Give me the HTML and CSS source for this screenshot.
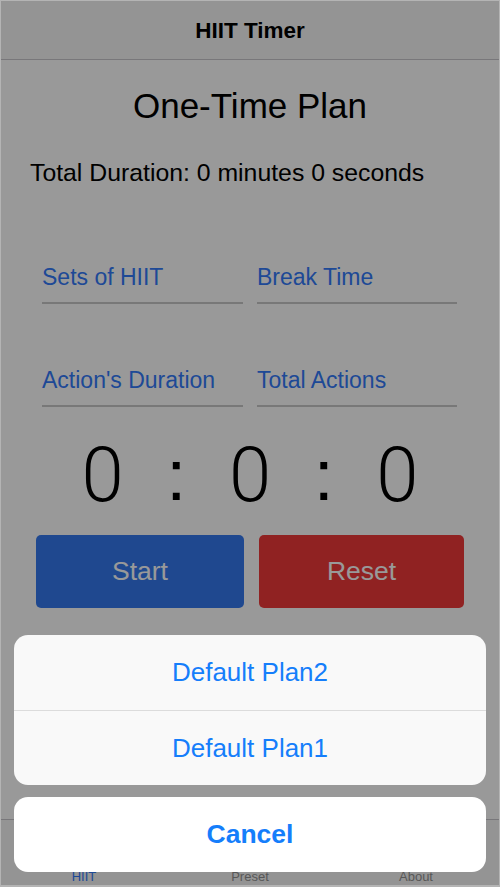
FILE: index.html
```html
<!DOCTYPE html>
<html>
<head>
<meta charset="utf-8">
<title>HIIT Timer</title>
<link rel="stylesheet" href="styles.css">
</head>
<body>
<div class="screen">
  <header class="navbar"><span class="nav-title">HIIT Timer</span></header>
  <main class="content">
    <h1 class="plan-title">One-Time Plan</h1>
    <p class="total">Total Duration: 0 minutes 0 seconds</p>
    <div class="fields">
      <div class="field">Sets of HIIT</div>
      <div class="field">Break Time</div>
      <div class="field">Action's Duration</div>
      <div class="field">Total Actions</div>
    </div>
    <div class="timer">
      <span>0</span><span class="colon">:</span><span>0</span><span class="colon">:</span><span>0</span>
    </div>
    <div class="buttons">
      <button class="btn btn-start">Start</button>
      <button class="btn btn-reset">Reset</button>
    </div>
  </main>
  <nav class="tabbar">
    <span class="tab tab-active">HIIT</span>
    <span class="tab">Preset</span>
    <span class="tab">About</span>
  </nav>
  <div class="dim"></div>
  <div class="sheet">
    <div class="sheet-group">
      <div class="sheet-item">Default Plan2</div>
      <div class="sheet-item">Default Plan1</div>
    </div>
    <div class="sheet-cancel">Cancel</div>
  </div>
</div>
</body>
</html>
```

FILE: styles.css
```css
html, body {
  margin: 0;
  padding: 0;
}
body {
  background: #b4b4b4;
  font-family: "Liberation Sans", Arial, sans-serif;
  padding: 1px 1px 2px 1px;
}
.screen {
  position: relative;
  height: 884px;
  background: #ffffff;
  overflow: hidden;
  display: flex;
  flex-direction: column;
}
.navbar {
  height: 58px;
  background: #f7f7f7;
  border-bottom: 1px solid #c8c7cc;
  display: flex;
  align-items: center;
  justify-content: center;
  flex: none;
}
.nav-title {
  font-weight: bold;
  font-size: 22.5px;
  color: #000;
  margin-top: 2px;
}
.content {
  flex: 1;
  display: flex;
  flex-direction: column;
}
.plan-title {
  margin: 26px 0 0 0;
  text-align: center;
  font-weight: normal;
  font-size: 35px;
  line-height: 40px;
  color: #000;
}
.total {
  margin: 33px 0 0 29px;
  font-size: 24.8px;
  line-height: 28px;
  color: #000;
}
.fields {
  display: grid;
  grid-template-columns: 201px 200px;
  column-gap: 14px;
  row-gap: 0;
  margin: 0 0 0 41px;
  padding-top: 76px;
}
.field {
  height: 103px;
  box-sizing: border-box;
  font-size: 23px;
  line-height: 28px;
  color: #337afa;
  white-space: nowrap;
}
.field::after {
  content: "";
  display: block;
  height: 2px;
  background: #c8c8c8;
  margin-top: 11px;
}
.timer {
  display: grid;
  grid-template-columns: repeat(5, 73.7px);
  justify-content: center;
  margin-top: -36px;
  font-family: Roboto, "Liberation Sans", sans-serif;
  font-weight: 300;
  font-size: 76px;
  line-height: 84px;
  color: #000;
  text-align: center;
}
.timer .colon {
  font-family: "Liberation Sans", Arial, sans-serif;
  font-weight: normal;
  font-size: 72px;
}
.buttons {
  display: flex;
  gap: 15px;
  margin: 18px 36px 0 35px;
}
.btn {
  flex: none;
  height: 73px;
  border: none;
  border-radius: 5px;
  font-family: "Liberation Sans", Arial, sans-serif;
  font-size: 26.5px;
  color: #ffffff;
  padding: 0;
}
.btn-start {
  width: 208px;
  background: #3579ef;
}
.btn-reset {
  width: 205px;
  background: #f03939;
}
.tabbar {
  flex: none;
  height: 65px;
  background: #f7f7f7;
  border-top: 1px solid #c8c7cc;
  display: grid;
  grid-template-columns: repeat(3, 1fr);
  align-items: end;
  text-align: center;
}
.tab {
  font-size: 13px;
  line-height: 16px;
  color: #929292;
}
.tab-active {
  color: #337afa;
}
.dim {
  position: absolute;
  inset: 0;
  background: rgba(0, 0, 0, 0.4);
}
.sheet {
  position: absolute;
  left: 13px;
  right: 13px;
  bottom: 13px;
  display: flex;
  flex-direction: column;
  gap: 12px;
}
.sheet-group {
  background: #f9f9f9;
  border-radius: 14px;
  overflow: hidden;
}
.sheet-item {
  height: 75px;
  display: flex;
  align-items: center;
  justify-content: center;
  font-size: 26px;
  color: #157efb;
}
.sheet-item + .sheet-item {
  border-top: 1px solid #dcdcdc;
  height: 74px;
}
.sheet-cancel {
  height: 75px;
  background: #ffffff;
  border-radius: 14px;
  display: flex;
  align-items: center;
  justify-content: center;
  font-size: 26.5px;
  font-weight: bold;
  color: #157efb;
}
```
